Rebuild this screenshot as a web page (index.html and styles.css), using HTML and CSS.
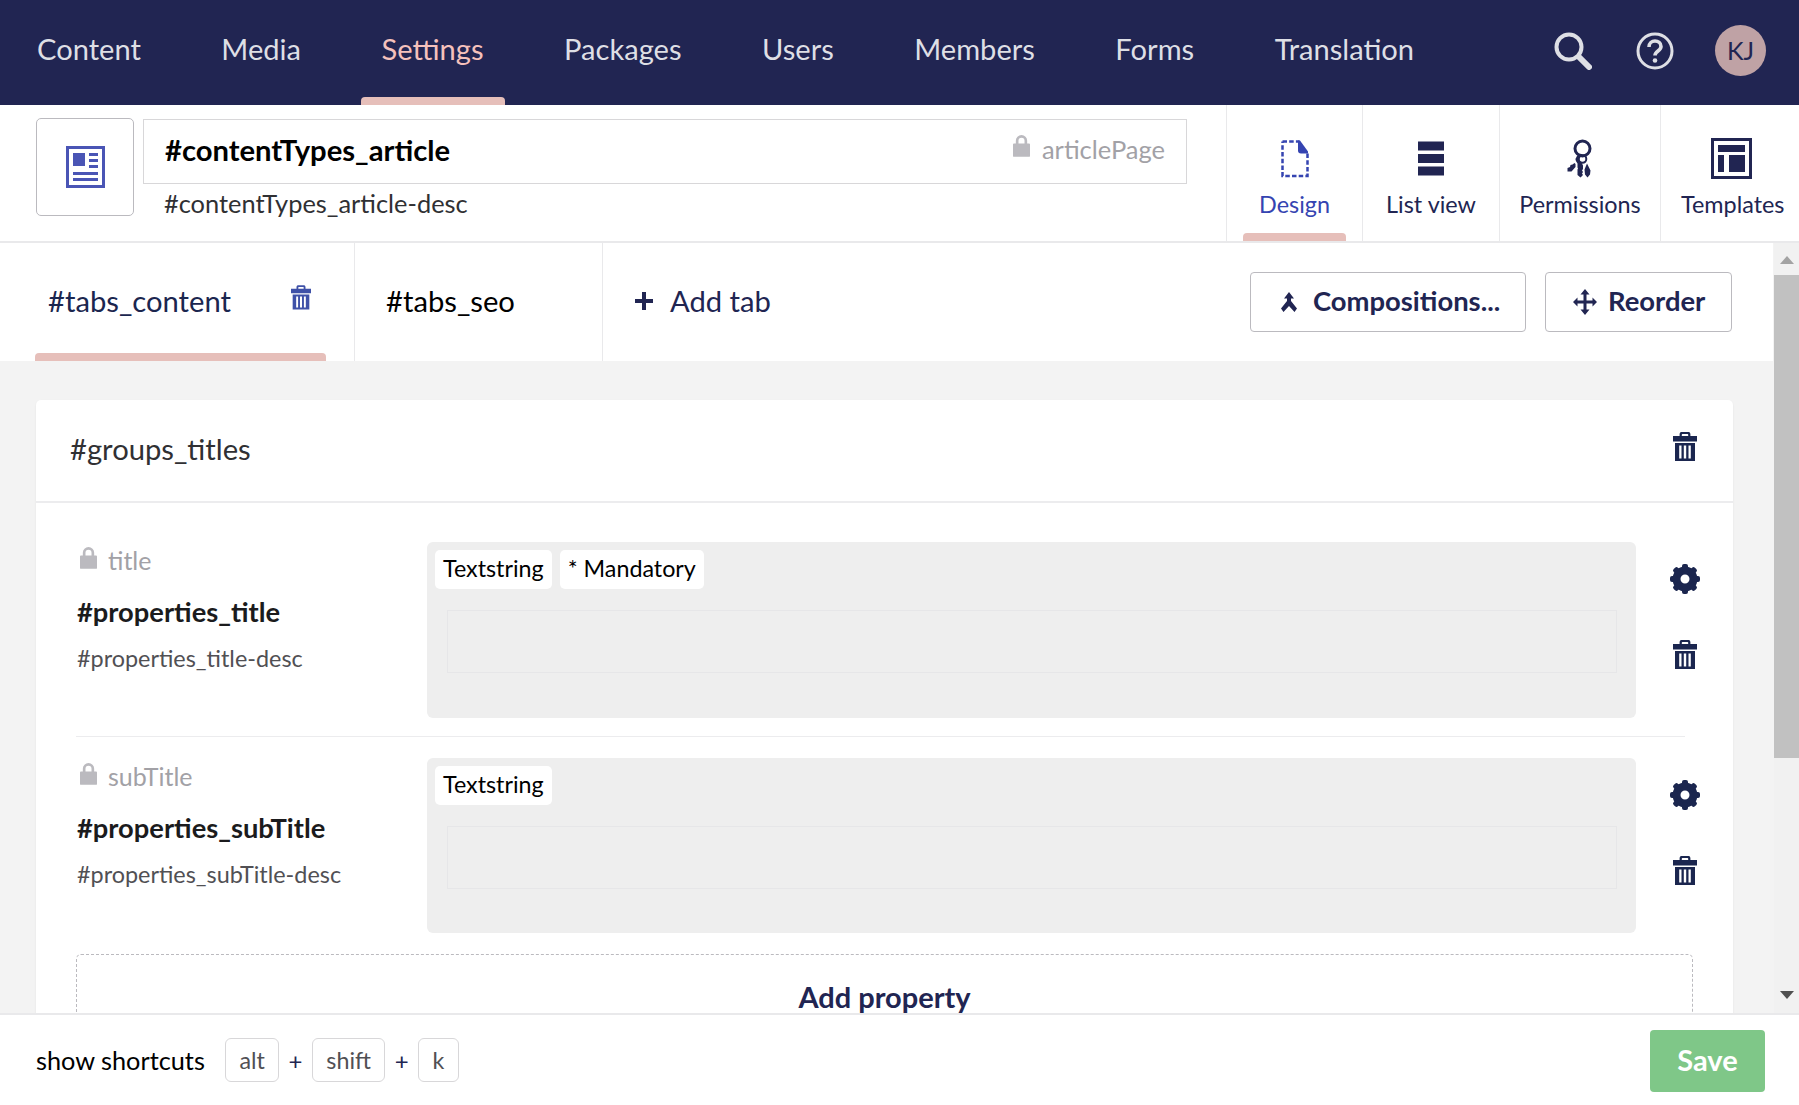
FILE: index.html
```html
<!DOCTYPE html>
<html lang="en">
  <head>
    <meta charset="UTF-8" />
    <title>Content type editor</title>
    <link rel="stylesheet" href="styles.css">
  </head>
  <body>
    <svg class="defs" width="0" height="0">
      <symbol id="i-trash" viewBox="0 0 24 30">
        <path fill-rule="evenodd" d="M6.600 5V3.200C6.600 1.600 7.600 1 8.800 1h6.400c1.200 0 2.200.6 2.200 2.200V5H24v5.500H0V5zm2.200 0h6.400V3.400q0-.4-.5-.4H9.300q-.5 0-.5.4z"/>
        <path fill-rule="evenodd" d="M2 12h20v18H2zM6.200 14.500v13h2.300v-13zm4.600 0v13h2.400v-13zm4.700 0v13h2.300v-13z"/>
      </symbol>
      <symbol id="i-gear" viewBox="0 0 30 30">
        <circle cx="15" cy="15" r="8.500" fill="none" stroke="#1b264f" stroke-width="8"/>
        <g fill="#1b264f">
          <rect x="12" y="0" width="6" height="8" rx="2"/>
          <rect x="12" y="0" width="6" height="8" rx="2" transform="rotate(45 15 15)"/>
          <rect x="12" y="0" width="6" height="8" rx="2" transform="rotate(90 15 15)"/>
          <rect x="12" y="0" width="6" height="8" rx="2" transform="rotate(135 15 15)"/>
          <rect x="12" y="0" width="6" height="8" rx="2" transform="rotate(180 15 15)"/>
          <rect x="12" y="0" width="6" height="8" rx="2" transform="rotate(225 15 15)"/>
          <rect x="12" y="0" width="6" height="8" rx="2" transform="rotate(270 15 15)"/>
          <rect x="12" y="0" width="6" height="8" rx="2" transform="rotate(315 15 15)"/>
        </g>
      </symbol>
      <symbol id="i-lock" viewBox="0 0 18 24">
        <path fill-rule="evenodd" d="M3 10V7a6 6 0 0 1 12 0v3h2a1 1 0 0 1 1 1v12a1 1 0 0 1-1 1H1a1 1 0 0 1-1-1V11a1 1 0 0 1 1-1zm2.800 0h6.400V7a3.200 3.200 0 0 0-6.400 0z"/>
      </symbol>
    </svg>

    <header class="topbar">
      <nav class="mainnav">
        <a class="navitem">Content</a>
        <a class="navitem">Media</a>
        <a class="navitem active">Settings</a>
        <a class="navitem">Packages</a>
        <a class="navitem">Users</a>
        <a class="navitem">Members</a>
        <a class="navitem">Forms</a>
        <a class="navitem">Translation</a>
      </nav>
      <div class="topicons">
        <svg class="ico-search" viewBox="0 0 38 38" fill="none" stroke="#dedfe5">
          <circle cx="15" cy="15" r="12.500" stroke-width="4"/>
          <path d="M25 25l10 10" stroke-width="6" stroke-linecap="round"/>
        </svg>
        <svg class="ico-help" viewBox="0 0 38 38" fill="none" stroke="#dedfe5">
          <circle cx="19" cy="19" r="17" stroke-width="3"/>
          <path d="M13 15c0-4 3-6 6-6s6 2 6 5.500c0 4.500-6 4.500-6 9" stroke-width="3.600"/>
          <circle cx="19" cy="28.500" r="2.300" fill="#dedfe5" stroke="none"/>
        </svg>
        <div class="avatar">KJ</div>
      </div>
    </header>

    <section class="editorhead">
      <div class="typeicon">
        <svg width="39" height="42" viewBox="0 0 39 42">
          <path fill="#4a55b5" fill-rule="evenodd" d="M0 0h39v42H0zM3 3v36h33V3z"/>
          <path fill="#4a55b5" d="M7 7h12v13H7zM23 7h9v3h-9zM23 13h9v3h-9zM23 19h9v3h-9zM7 26h25v3H7zM7 32h25v3H7z"/>
        </svg>
      </div>
      <div class="namewrap">
        <div class="namefield">
          <span class="typename">#contentTypes_article</span>
          <span class="alias">
            <svg class="lock"><use href="#i-lock"/></svg>
            articlePage
          </span>
        </div>
        <div class="typedesc">#contentTypes_article-desc</div>
      </div>
      <div class="apps">
        <a class="app app-design active">
          <svg width="28" height="38" viewBox="0 0 28 38">
            <path fill="none" stroke="#3544b1" stroke-width="2.500" stroke-dasharray="4.500 2.200" d="M1.500 2h17M26.500 14v22.500H1.500V2"/>
            <path fill="#3544b1" d="M17 1h2l8 11v2H20q-3 0-3-3z"/>
          </svg>
          <span>Design</span>
        </a>
        <a class="app app-list">
          <svg width="26" height="34" viewBox="0 0 26 34" fill="#212552">
            <path d="M0 0h26v9H0zM0 12.500h26v9H0zM0 25h26v9H0z"/>
          </svg>
          <span>List view</span>
        </a>
        <a class="app app-perm">
          <svg width="26" height="38" viewBox="0 0 26 38" fill="#212552">
            <circle cx="15.500" cy="9" r="7.500" fill="none" stroke="#212552" stroke-width="3"/>
            <circle cx="15.500" cy="19.500" r="3.800" fill="none" stroke="#212552" stroke-width="2"/>
            <path d="M12 14.500q2-.5 3.500.5l-1.800 2.500a3 3 0 0 0 .8 5.500L16 26v3.500l-1 1.500 1 1.500-1 1.500 1 1.500-2.500 2.500-3-2.500v-5.500l.5-1-.5-1V24q-4.500-5 1.500-9.500z"/>
            <path d="M7.500 23.500l1 1v3l-4 4.500H.5v-3.500l2.500-1 .5-2 2-.5zM20 24l3.500 7-.5 4-2.500 3-2.500-3-.5-5z"/>
          </svg>
          <span>Permissions</span>
        </a>
        <a class="app app-tmpl">
          <svg width="41" height="41" viewBox="0 0 41 41" fill="#212552">
            <path fill-rule="evenodd" d="M0 0h41v41H0zM3 3v35h35V3z"/>
            <path d="M7 7h27v7H7zM7 17h6v17H7zM18 17h16v17H18z"/>
          </svg>
          <span>Templates</span>
        </a>
      </div>
    </section>

    <div class="workarea">
      <main class="scroller">
        <div class="tabsbar">
          <div class="tab tab-first active">
            <span>#tabs_content</span>
            <svg class="tabtrash"><use href="#i-trash"/></svg>
          </div>
          <div class="tab tab-second"><span>#tabs_seo</span></div>
          <div class="addtab">
            <svg width="18" height="18" viewBox="0 0 18 18" fill="#212552"><path d="M7 0h4v7h7v4h-7v7H7v-7H0V7h7z"/></svg>
            <span>Add tab</span>
          </div>
          <div class="tabactions">
            <button class="btn btn-comp">
              <svg width="16" height="20" viewBox="0 0 16 20" fill="#212552">
                <path d="M8 0l5 6.500h-3V9l6 7.500-2.500 3.500L8 14l-5.500 6L0 16.500 6 9V6.500H3z"/>
              </svg>
              <span class="btntext">Compositions...</span>
            </button>
            <button class="btn btn-reorder">
              <svg width="24" height="26" viewBox="0 0 24 26" fill="#212552">
                <path d="M12 0l4.500 5.500h-3v6h6v-3L24 13l-4.500 4.500v-3h-6v6h3L12 26l-4.500-5.500h3v-6h-6v3L0 13l4.500-4.500v3h6v-6h-3z"/>
              </svg>
              <span class="btntext">Reorder</span>
            </button>
          </div>
        </div>

        <section class="group">
          <div class="grouphead">
            <span class="grouptitle">#groups_titles</span>
            <svg class="act-trash"><use href="#i-trash"/></svg>
          </div>
          <div class="groupbody">
            <div class="prop">
              <div class="propinfo">
                <div class="propalias"><svg class="lock lock-sm"><use href="#i-lock"/></svg>title</div>
                <div class="propname">#properties_title</div>
                <div class="propdesc">#properties_title-desc</div>
              </div>
              <div class="preview">
                <div class="tags">
                  <span class="tag">Textstring</span>
                  <span class="tag">* Mandatory</span>
                </div>
                <div class="fakeinput"></div>
              </div>
              <div class="propacts">
                <svg class="act-gear"><use href="#i-gear"/></svg>
                <svg class="act-trash"><use href="#i-trash"/></svg>
              </div>
            </div>
            <div class="prop prop-second">
              <div class="propinfo">
                <div class="propalias"><svg class="lock lock-sm"><use href="#i-lock"/></svg>subTitle</div>
                <div class="propname">#properties_subTitle</div>
                <div class="propdesc">#properties_subTitle-desc</div>
              </div>
              <div class="preview">
                <div class="tags">
                  <span class="tag">Textstring</span>
                </div>
                <div class="fakeinput"></div>
              </div>
              <div class="propacts">
                <svg class="act-gear"><use href="#i-gear"/></svg>
                <svg class="act-trash"><use href="#i-trash"/></svg>
              </div>
            </div>
            <div class="addprop">Add property</div>
          </div>
        </section>
      </main>
      <div class="scrollbar">
        <div class="arrow arrow-up"></div>
        <div class="thumb"></div>
        <div class="arrow arrow-down"></div>
      </div>
    </div>

    <footer class="footer">
      <div class="shortcuts">
        <span class="shortlabel">show shortcuts</span>
        <kbd class="key">alt</kbd><span class="plus">+</span>
        <kbd class="key">shift</kbd><span class="plus">+</span>
        <kbd class="key">k</kbd>
      </div>
      <button class="save">Save</button>
    </footer>
  </body>
</html>
```

FILE: styles.css
```css
/* Page */
* {
  box-sizing: border-box;
}

html,
body {
  height: 100%;
}

body {
  margin: 0;
  display: flex;
  flex-direction: column;
  overflow: hidden;
  font-family: Lato, "Open Sans", sans-serif;
  color: #212552;
  background-color: #f3f3f3;
}

.defs {
  position: absolute;
}

/* Top bar */
.topbar {
  flex: 0 0 105px;
  display: flex;
  justify-content: space-between;
  background-color: #212552;
}

.mainnav {
  display: flex;
  padding-left: 16px;
  gap: 38.500px;
}

.navitem {
  position: relative;
  display: flex;
  align-items: center;
  padding: 0 21px 8px;
  font-size: 29.100px;
  color: #dedfe5;
}

.navitem.active {
  color: #f5c1bc;
}

.navitem.active::after {
  content: "";
  position: absolute;
  left: 0;
  right: 0;
  bottom: 0;
  height: 8px;
  background-color: #e6bfba;
  border-radius: 4px 4px 0 0;
}

.topicons {
  display: flex;
  align-items: center;
  padding: 0 33px 4px 0;
}

.ico-search {
  width: 38px;
  height: 38px;
  margin-right: 44px;
}

.ico-help {
  width: 38px;
  height: 38px;
  margin-right: 41px;
}

.avatar {
  width: 51px;
  height: 51px;
  padding-bottom: 2px;
  display: flex;
  align-items: center;
  justify-content: center;
  border-radius: 50%;
  background-color: #bfa2a5;
  color: #212552;
  font-size: 25px;
}

/* Editor header */
.editorhead {
  flex: 0 0 138px;
  display: flex;
  background-color: #fff;
  border-bottom: 2px solid #e9e9eb;
  padding-left: 36px;
}

.typeicon {
  width: 98px;
  height: 98px;
  margin-top: 13px;
  display: flex;
  align-items: center;
  justify-content: center;
  border: 1px solid #bbbabf;
  border-radius: 5px;
}

.namewrap {
  width: 1044px;
  margin: 14px 39px 0 9px;
}

.namefield {
  height: 65px;
  display: flex;
  align-items: center;
  justify-content: space-between;
  padding: 0 21px 5px 21px;
  border: 1px solid #d8d7d9;
}

.typename {
  font-size: 29.200px;
  font-weight: 700;
  color: #000;
}

.alias {
  display: flex;
  align-items: center;
  margin-bottom: 1px;
  font-size: 25.500px;
  color: #a2a1a6;
}

.lock {
  width: 17px;
  height: 23px;
  margin: 0 12px 6px 0;
  fill: #bbbabf;
}

.typedesc {
  margin: 0 0 0 21px;
  font-size: 25.400px;
  line-height: 38px;
  color: #303033;
}

.apps {
  flex: 1;
  display: flex;
  height: 136px;
}

.app {
  position: relative;
  display: flex;
  flex-direction: column;
  align-items: center;
  height: 136px;
  border-left: 1px solid #e9e9eb;
  font-size: 23.400px;
  color: #212552;
}

.app svg {
  margin-top: 33px;
  height: 41px;
}

.app span {
  position: absolute;
  top: 85px;
}

.app-design {
  width: 136px;
  color: #3544b1;
}

.app-list {
  width: 137px;
}

.app-perm {
  width: 161px;
}

.app-tmpl {
  flex: 1;
  padding-left: 3px;
}

.app-tmpl span {
  left: 20px;
}

.app.active::after {
  content: "";
  position: absolute;
  left: 16px;
  right: 16px;
  bottom: 0;
  height: 8px;
  background-color: #e6bfba;
  border-radius: 4px 4px 0 0;
}

/* Work area */
.workarea {
  flex: 1;
  min-height: 0;
  display: flex;
}

.scroller {
  flex: 1;
  min-width: 0;
  overflow: hidden;
}

.scrollbar {
  flex: 0 0 25px;
  position: relative;
  background-color: #f1f1f1;
}

.thumb {
  position: absolute;
  top: 32px;
  left: 0;
  right: 0;
  height: 483px;
  background-color: #c1c1c1;
}

.arrow {
  position: absolute;
  left: 6px;
  width: 0;
  height: 0;
  border-left: 7px solid transparent;
  border-right: 7px solid transparent;
}

.arrow-up {
  top: 13px;
  border-bottom: 8px solid #a3a3a3;
}

.arrow-down {
  bottom: 14px;
  border-top: 8px solid #505050;
}

/* Tabs */
.tabsbar {
  height: 118px;
  display: flex;
  align-items: stretch;
  margin-right: 1px;
  background-color: #fff;
}

.tab {
  position: relative;
  display: flex;
  align-items: center;
  padding-bottom: 4px;
  font-size: 29.200px;
  border-right: 1px solid #e9e9eb;
  color: #1b264f;
}

.tab-first {
  width: 355px;
  padding-left: 48px;
}

.tab-second {
  width: 248px;
  padding-left: 31px;
  color: #000;
}

.tab.active::after {
  content: "";
  position: absolute;
  left: 35px;
  width: 291px;
  bottom: 0;
  height: 8px;
  background-color: #e6bfba;
  border-radius: 4px 4px 0 0;
}

.tabtrash {
  width: 20px;
  height: 26px;
  margin: 0 0 6px 60px;
  fill: #3f51a8;
}

.addtab {
  display: flex;
  align-items: center;
  gap: 17px;
  padding: 0 0 3px 32px;
  font-size: 29.200px;
}

.tabactions {
  margin-left: auto;
  display: flex;
  gap: 19px;
  padding: 29px 41px 0 0;
}

.btn {
  height: 60px;
  display: flex;
  align-items: center;
  border: 1px solid #bbbabf;
  border-radius: 4px;
  background-color: #fff;
  font-family: inherit;
  font-size: 27.400px;
  font-weight: 700;
  color: #212552;
}

.btntext {
  margin-bottom: 3px;
}

.btn-comp {
  width: 276px;
  padding-left: 30px;
  gap: 16px;
}

.btn-reorder {
  width: 187px;
  padding-left: 27px;
  gap: 11px;
}

/* Group card */
.group {
  margin: 39px 41px 0 36px;
  background-color: #fff;
  border-radius: 5px;
  box-shadow: 0 1px 2px rgba(0, 0, 0, 0.08);
}

.grouphead {
  height: 103px;
  display: flex;
  align-items: center;
  justify-content: space-between;
  padding: 0 36px 0 34px;
  border-bottom: 2px solid #ececee;
  color: #303033;
}

.grouptitle {
  margin-bottom: 4px;
  font-size: 29.200px;
}

.act-trash {
  width: 24px;
  height: 30px;
  fill: #1b264f;
}

.grouphead .act-trash {
  margin-bottom: 10px;
}

.groupbody {
  padding: 39px 40px 0;
}

.prop {
  display: flex;
  width: 1609px;
  height: 195px;
  border-bottom: 1px solid #ececee;
}

.prop-second {
  height: 196px;
  margin-top: 21px;
  border-bottom: 0;
}

.propinfo {
  flex: 0 0 351px;
  padding-left: 1px;
}

.propalias {
  display: flex;
  align-items: center;
  height: 36px;
  font-size: 25px;
  color: #a2a1a6;
}

.lock-sm {
  margin: 0 11px 6px 3px;
}

.propname {
  margin-top: 15px;
  font-size: 27.300px;
  font-weight: 700;
  line-height: 38px;
  color: #1b1b1d;
}

.propdesc {
  margin-top: 10px;
  font-size: 23.400px;
  line-height: 34px;
  color: #515054;
}

.preview {
  flex: 0 0 1209px;
  height: 176px;
  padding: 8px;
  background-color: #eee;
  border-radius: 6px;
}

.prop-second .preview {
  height: 175px;
}

.tags {
  display: flex;
  gap: 8px;
}

.tag {
  height: 39px;
  display: flex;
  align-items: center;
  padding: 0 8px 4px;
  background-color: #fff;
  border-radius: 5px;
  font-size: 23.300px;
  color: #000;
}

.fakeinput {
  height: 63px;
  margin: 21px 11px 0 12px;
  border: 1px solid #e6e6e8;
}

.propacts {
  flex: 0 0 98px;
  display: flex;
  flex-direction: column;
  align-items: center;
  padding: 22px 0 0 0;
  gap: 45px;
}

.act-gear {
  width: 30px;
  height: 30px;
}

.addprop {
  height: 120px;
  padding-top: 24px;
  width: 1617px;
  border: 1px dashed #bbbabf;
  border-radius: 5px;
  text-align: center;
  font-size: 29px;
  font-weight: 700;
  color: #212552;
}

/* Footer */
.footer {
  position: relative;
  flex: 0 0 92px;
  display: flex;
  align-items: center;
  justify-content: space-between;
  padding: 0 34px 0 36px;
  background-color: #fff;
  border-top: 2px solid #e9e9eb;
}

.shortcuts {
  display: flex;
  align-items: center;
  font-size: 25.300px;
  color: #000;
}

.shortlabel {
  margin-right: 20px;
}

.key {
  height: 44px;
  display: flex;
  align-items: center;
  padding: 0 13.500px;
  border: 1px solid #d8d7d9;
  border-radius: 6px;
  font-family: inherit;
  font-size: 23.300px;
  color: #515054;
}

.plus {
  width: 32.500px;
  text-align: center;
  font-size: 24px;
  color: #212552;
}

.save {
  width: 115px;
  height: 62px;
  margin-top: 2px;
  padding-bottom: 4px;
  border: 0;
  border-radius: 4px;
  background-color: #7fc788;
  font-family: inherit;
  font-size: 29px;
  font-weight: 700;
  color: #fff;
}
```
